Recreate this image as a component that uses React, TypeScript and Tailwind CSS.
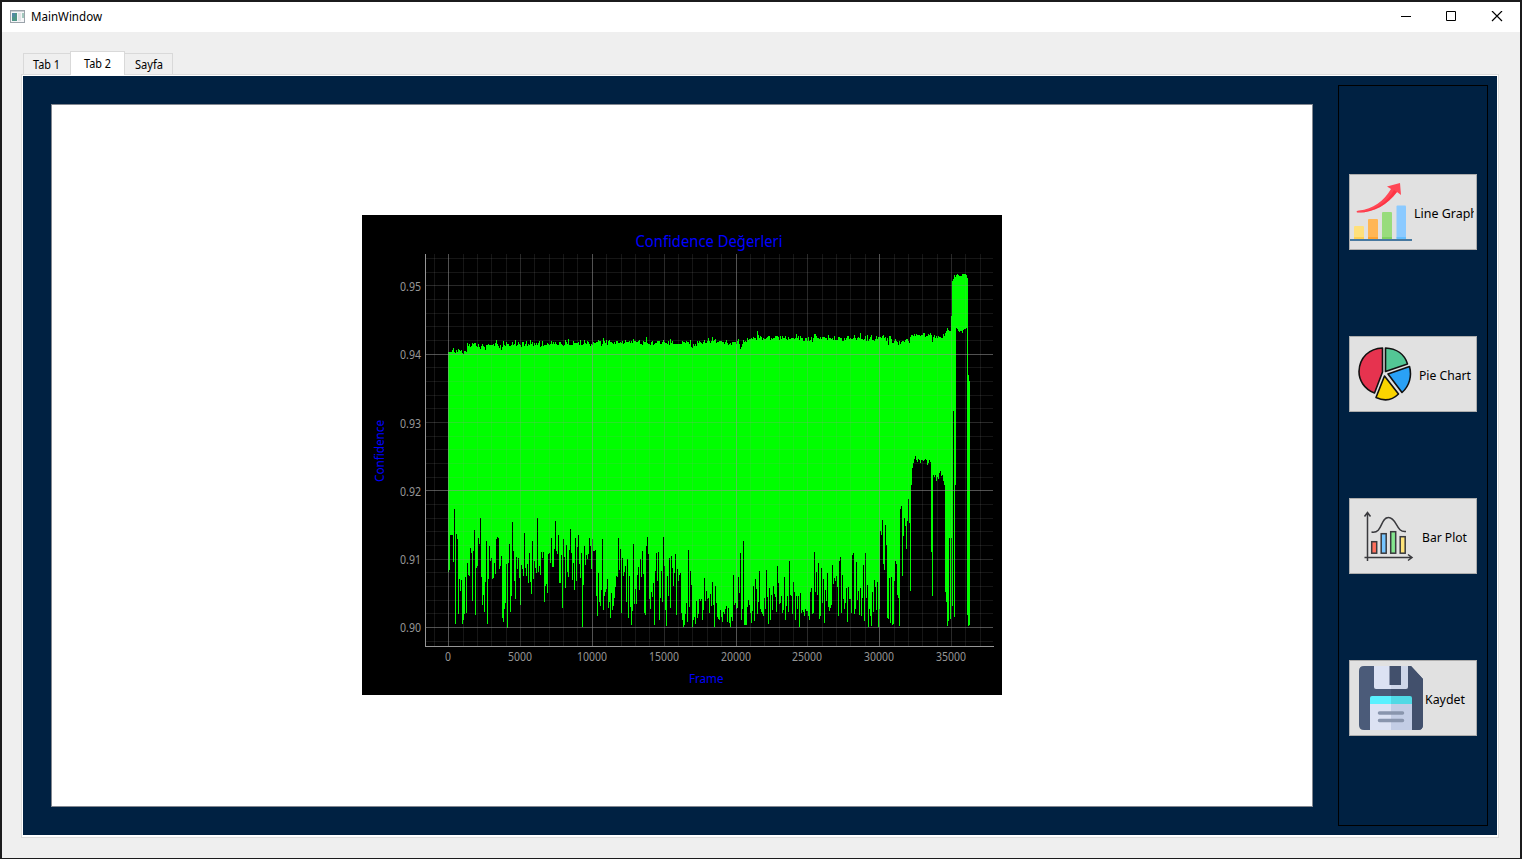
import type { ReactNode } from "react";

const FIRST_X = 86;
const ZERO_Y = 412;
const COL = 3;

// Lower edge of the trace, one sample per pixel column, in thirds of a pixel below y = 280.
const LOW_A = `230 224 120 120 120 200 42 386 118 132 356 252 288 255 386 374 356 246 353 204 240 243 159 174 317 168 105 359 219 213
129 147 69 246 329 300 350 261 138 386 252 153 198 189 252 248 204 237 132 126 129 222 213 183 368 380 342 323 207 398
204 147 350 303 81 168 258 311 186 222 189 249 329 210 222 243 114 219 243 207 264 174 261 296 138 252 198 219 234 69
231 213 240 171 189 171 320 272 267 294 177 174 204 129 216 216 162 78 168 177 120 264 264 180 338 132 186 279 150 231
246 165 102 174 255 204 285 129 258 156 120 207 249 174 396 270 153 210 180 192 177 129 153 222 132 168 168 165 303 362
234 320 332 285 132 345 303 291 282 252 338 321 368 294 345 332 308 276 243 246 129 225 162 353 189 243 231 213 320 192
368 243 335 390 347 147 327 282 327 240 216 285 192 246 168 237 353 359 153 126 177 311 342 291 305 264 390 228 174 258
171 374 308 228 320 126 213 345 392 243 303 189 338 183 219 272 234 177 359 222 258 240 234 353`;

const LOW_B = `374 396 390 356 323 380 165 335 228 270 396 374 366 386 318 368 356 312 318 312 374 345 249 318 288 311 308 353 297 332
261 329 396 273 323 366 372 374 345 366 380 350 356 342 333 380 338 383 396 366 377 240 329 323 342 338 246 294 174 374
342 138 390 390 390 335 315 330 353 383 348 273 377 252 282 356 320 228 342 350 356 362 308 341 225 305 386 279 374 300
345 273 297 306 350 213 264 326 323 303 353 345 246 374 332 303 350 198 300 303 356 261 291 374 303 341 303 396 294 353
345 350 362 342 347 347 362 374 291 279 356 353 171 291 231 300 204 372 362 219 323 252 383 285 317 234 335 347 338 329
210 267 249 258 243 276 362 198 186 353 240 311 341 323 279 380 276 311 311 353 180 174 356 342 201 314 288 359 279 362
309 210 377 174 308 270 396 341 362 392 291 350 255 276 345 261 396 342 108 120 75 207 225 90 150 368 372 249 383 246
390 386 258 198 207 300 308 392 42 33 243 123 69 93 162 78 12 84 288`;

// The raised stretch before the last burst.
const LOW_C = `-30 -81 -96 -108 -117 -105 -99 -108 -105 -96 -105 -105 -102 -105 -108 -105 -90 -96 -105 -99 171 302
-60 -54 -60 -42 -54 -48 -66 -72 -57 -60 -42 -30 290 320 392 377 129 372 129 332`;

// Upper edge, in thirds of a pixel from the top of the plot image.
const HIGH_A = `411 411 411 411 405 399 411 414 405 411 402 405 408 405 414 417 408 408 411 384 393 387 396 393 384 387 384 384 393 396
387 396 402 393 387 393 396 405 390 390 387 390 390 390 390 387 393 384 375 387 393 399 390 405 396 378 390 393 381 387
387 393 393 390 381 390 387 375 393 390 381 387 390 396 381 381 393 387 378 393 387 390 375 387 381 393 384 390 384 390
384 378 396 393 378 393 390 390 390 384 387 390 387 378 387 381 387 381 387 390 390 381 381 387 390 393 390 375 381 387
372 390 390 390 390 378 384 384 384 384 381 390 375 390 390 387 375 384 387 378 381 387 393 387 390 381 384 384 381 381
375 378 378 393 387 369 378 384 375 390 378 375 381 381 384 387 381 387 378 378 384 384 381 384 378 387 384 375 381 381
381 378 384 378 384 372 378 378 381 381 378 375 387 387 390 378 381 381 366 384 387 387 390 381 378 390 387 384 384 378
378 378 387 387 381 375 381 384 384 387 378 390 372 384 378 387`;

const HIGH_B = `378 381 381 384 378 381 381 387 375 396 399 387 393 387 393 378 384 378 381 384 387 381 375 384 384 378 369 378
384 378 366 378 375 372 384 381 381 378 378 378 381 381 387 381 375 384 390 387 384 390 381 381 381 381 387 378 372 387
402 396 387 375 381 378 381 369 375 372 372 369 372 366 369 369 375 348 360 369 363 366 375 369 372 372 369 366 363
363 375 369 372 369 369 363 363 363 366 375 363 372 363 369 369 363 372 375 366 372 372 369 369 369 372 369 357 369 363
375 363 369 369 378 378 369 369 378 366 378 375 366 381 369 357 357 363 369 369 372 366 372 366 366 366 369 369 375 360
369 369 372 369 375 363 375 375 375 366 366 369 369 378 378 369 375 369 363 363 372 369 372 372 369 360 369 375 369 366
369 354 372 372 375 372 363 378 360 378 372 366 360 375 375 378 372 363 372 366 366 366 369 363 360 369 366 378 369 390
363 363 372 384 384 378 372 378 381 390 378 387 381 378 378 381 375 372 372 378 384 366 360 360 363 357 363 357 360 360
360 363 360 360 354 354 366 363 363 357 360 354 360 381 366 360 369 363 369 363 366 366 369 369 357 363 369 360 354 339
345 348 348 303`;

const numbers = (s: string) => s.trim().split(/\s+/).map(Number);
const lowLeft = numbers(LOW_A).slice(0, 234);
const lowRight = numbers(LOW_B);
const lowTail = numbers(LOW_C);
const highLeft = numbers(HIGH_A).slice(0, 234);
const highRight = numbers(HIGH_B);

function traceColumns(): string {
  const at = new Map<number, [number, number]>();
  const top = (x: number) => {
    const list = x < 320 ? highLeft : highRight;
    const i = x < 320 ? x - FIRST_X : x - 320;
    const v = list[Math.min(i, list.length - 1)];
    return Math.round(v / COL);
  };
  const bottom = (v: number) => Math.round(280 + v / COL);
  lowLeft.forEach((v, i) => at.set(FIRST_X + i, [top(FIRST_X + i), bottom(v)]));
  lowRight.forEach((v, i) => at.set(320 + i, [top(320 + i), bottom(v)]));
  lowTail.forEach((v, i) => at.set(549 + i, [top(549 + i), bottom(v)]));
  [118, 116, 113, 115, 116, 116].forEach((y, i) => {
    const low = at.get(583 + i)?.[1] ?? 391;
    at.set(583 + i, [y, low]);
  });
  at.set(589, [101, 323]);
  at.set(590, [66, 391]);
  at.set(591, [64, 196]);
  at.set(592, [60, 402]);
  at.set(593, [62, 270]);
  const burstTop = [60, 59, 60, 61, 61, 61, 59, 59, 59, 59, 60];
  const burstLow = [113, 114, 116, 117, 116, 116, 118, 115, 114, 114, 113];
  burstTop.forEach((y, i) => at.set(594 + i, [y, burstLow[i]]));
  at.set(605, [63, 400]);
  at.set(606, [160, 411]);
  at.set(607, [166, 410]);
  return [...at].map(([x, [a, b]]) => `M${x} ${a}h1V${b}h-1z`).join("");
}

const trace = traceColumns();

const xLines = Array.from({ length: 39 }, (_, i) => i - 1).map((k) => ({
  p: Math.round(86.2 + k * 14.365),
  o: k % 10 === 0 ? 0.55 : k % 5 === 0 ? 0.27 : 0.15,
}));
const yLines = Array.from({ length: 29 }, (_, i) => i - 1).map((k) => ({
  p: Math.round(ZERO_Y - k * 13.67),
  o: k % 10 === 0 ? 0.55 : k % 5 === 0 ? 0.27 : 0.15,
}));

const xTicks: [string, number, number][] = [
  ["0", 86, 6], ["5000", 158, 24], ["10000", 230, 30], ["15000", 302, 30],
  ["20000", 374, 30], ["25000", 445, 30], ["30000", 517, 30], ["35000", 589, 30],
];
const yTicks: [string, number][] = [
  ["0.95", 76], ["0.94", 144], ["0.93", 213], ["0.92", 281], ["0.91", 349], ["0.90", 417],
];

function Plot() {
  return (
    <svg width="640" height="480" viewBox="0 0 640 480" className="block shrink-0 bg-black font-['Noto_Sans',sans-serif]">
      <path d={trace} fill="#00ff00" shapeRendering="crispEdges" />
      <g fill="#969696" shapeRendering="crispEdges">
        {xLines.map((l) => <rect key={l.p} x={l.p} y="39" width="1" height="392" fillOpacity={l.o} />)}
        {yLines.map((l) => <rect key={l.p} x="64" y={l.p} width="567" height="1" fillOpacity={l.o} />)}
        <rect x="63" y="39" width="1" height="393" />
        <rect x="63" y="431" width="569" height="1" />
      </g>
      <g fill="#969696" fontSize="12.5">
        {xTicks.map(([t, x, w]) => <text key={t} x={x - w / 2} y="446" textLength={w} lengthAdjust="spacingAndGlyphs">{t}</text>)}
        {yTicks.map(([t, y]) => <text key={t} x="38" y={y} textLength="21" lengthAdjust="spacingAndGlyphs">{t}</text>)}
      </g>
      <g fill="#0000ff">
        <text x="273.500" y="32" fontSize="16" textLength="147" lengthAdjust="spacingAndGlyphs">Confidence Değerleri</text>
        <text x="327" y="468" fontSize="12.5" textLength="34.500" lengthAdjust="spacingAndGlyphs">Frame</text>
        <text transform="translate(21.500 267) rotate(-90)" fontSize="12" textLength="62" lengthAdjust="spacingAndGlyphs">Confidence</text>
      </g>
    </svg>
  );
}

function Label({ text, width }: { text: string; width: number }) {
  return (
    <svg width={width} height="20" className="block shrink-0 overflow-visible font-['Noto_Sans',sans-serif]">
      <text x="0" y="14" fontSize="12.5" textLength={width} lengthAdjust="spacingAndGlyphs" fill="#000">{text}</text>
    </svg>
  );
}

function LineGraphIcon() {
  return (
    <svg width="64" height="64" viewBox="0 0 64 64" className="block shrink-0">
      <rect x="5" y="46" width="10" height="13" rx="1" fill="#ffe07a" />
      <rect x="19" y="39" width="10" height="20" rx="1" fill="#ffb655" />
      <rect x="33" y="32" width="10" height="27" rx="1" fill="#98dc7c" />
      <rect x="47.500" y="25.500" width="9.500" height="33" rx="1" fill="#8bcaff" />
      <path d="M5 57h10v2H5z" fill="#ffd052" /><path d="M19 57h10v2H19z" fill="#ffa533" />
      <path d="M33 57h10v2H33z" fill="#80d261" /><path d="M47.500 57h9.500v2h-9.500z" fill="#66bfff" />
      <path d="M-1 60h64" stroke="#4779a0" strokeWidth="2" />
      <path d="M8 32.500c-1-1-.2-2 2-2C24 29 35 21 42 9l-4-2.500L51 3l1 12-4-3C38 25 25 33 8 32.500z" fill="#ff4755" />
      <path d="M8 32.500C25 31 38 23 45 10l3 2C38 25 25 33 8 32.500z" fill="#fc2b3a" opacity=".65" />
    </svg>
  );
}

function PieIcon() {
  return (
    <svg width="64" height="64" viewBox="0 0 64 64" className="block shrink-0" stroke="#111" strokeWidth="1.600" strokeLinejoin="round">
      <path d="M28.500 6V30L20.500 51C10 47 5 38 5 29.500 5.500 15 15.500 6.500 28.500 6z" fill="#e6334f" />
      <path d="M31.500 6C42 6.500 50.500 12 53.500 22L31.500 29.500z" fill="#53c795" />
      <path d="M34 32 55.500 24.500C58 34 55.500 44 48 50.500z" fill="#2aa1f5" />
      <path d="M30.500 34 44.500 52C38 58.500 29.500 59 22 55.500z" fill="#fad400" />
    </svg>
  );
}

function BarPlotIcon() {
  return (
    <svg width="64" height="64" viewBox="0 0 64 64" className="block shrink-0" fill="none" stroke="#3a3a3e" strokeWidth="1.500">
      <path d="M13.500 57V9M10.500 12.500l3-4 3 4M10.500 53.500H57M54 50.500l4 3-4 3" />
      <path d="M17.500 28C29 30 26 13.500 34.500 13.500S42 29 52 27.500" />
      <rect x="17.700" y="37.700" width="5" height="11.500" fill="#ff705c" />
      <rect x="27.200" y="29.700" width="5" height="19.500" fill="#75c5ff" />
      <rect x="36.700" y="27.700" width="5" height="21.500" fill="#84e58e" />
      <rect x="46.200" y="32.700" width="5" height="16.500" fill="#ffe47a" />
    </svg>
  );
}

function SaveIcon() {
  return (
    <svg width="64" height="64" viewBox="0 0 64 64" className="block shrink-0">
      <path d="M5 0h47l12 13v46q0 5-5 5H5q-5 0-5-5V5q0-5 5-5z" fill="#4b5b79" />
      <path d="M32 0h20l12 13v46q0 5-5 5H32z" fill="#42506c" />
      <path d="M15 0h17v23H17q-2 0-2-2z" fill="#dce2f3" />
      <path d="M32 0h17v21q0 2-2 2H32z" fill="#ced6e8" />
      <path d="M30.500 0H42v19H30.500z" fill="#42506c" />
      <path d="M11 38h21v26H11z" fill="#dce2f3" /><path d="M32 38h21v26H32z" fill="#c3cde5" />
      <path d="M13 30h19v8H11v-6q0-2 2-2z" fill="#5af1ff" /><path d="M32 30h19q2 0 2 2v6H32z" fill="#50d9e5" />
      <path d="M20.500 47h23M20.500 54.500h23" stroke="#8995ad" strokeWidth="3.500" strokeLinecap="round" />
    </svg>
  );
}

function SideButton({ className, children }: { className: string; children: ReactNode }) {
  return (
    <button className={`flex h-[76px] w-32 shrink-0 items-center overflow-hidden border border-[#adadad] bg-[#e1e1e1] ${className}`}>
      {children}
    </button>
  );
}

function TitleBar() {
  return (
    <header className="flex h-[30px] shrink-0 items-center bg-white">
      <svg width="15" height="13" viewBox="0 0 15 13" className="mb-0.5 ml-2 block shrink-0" shapeRendering="crispEdges">
        <rect x=".5" y=".5" width="14" height="12" fill="#f5f6f8" stroke="#9ba3aa" />
        <rect x="1" y="1" width="13" height="1" fill="#c9ced3" />
        <rect x="2" y="3" width="5" height="8" fill="#4f9688" />
        <rect x="2" y="3" width="3" height="4" fill="#538aa3" />
        <rect x="8" y="3" width="3" height="8" fill="#e1e3e5" />
        <rect x="12" y="3" width="2" height="5" fill="#a2c8bd" />
      </svg>
      <div className="ml-1.5"><Label text="MainWindow" width={71} /></div>
      <svg width="104" height="12" viewBox="0 0 104 12" className="ml-auto mr-[17px] block" fill="none" stroke="#000">
        <path d="M2 5.500h10" /><path d="M47.500.5h9v9h-9z" /><path d="M93 0l10 10M103 0 93 10" strokeWidth="1.200" />
      </svg>
    </header>
  );
}

export default function App() {
  return (
    <div className="flex h-[859px] w-[1522px] flex-col overflow-hidden border-x-2 border-b border-t-2 border-[#1b1b1c] bg-[#efefef]">
      <TitleBar />
      <nav className="flex h-[42px] shrink-0 items-end pl-[21px]">
        <div className="flex h-[21px] w-[47px] items-center border border-b-0 border-r-0 border-[#d9d9d9] pl-[9px] pt-0.5"><Label text="Tab 1" width={27} /></div>
        <div className="relative z-10 -mb-px flex h-6 w-[55px] items-center border border-b-0 border-[#d9d9d9] bg-white pl-[13px]"><Label text="Tab 2" width={27} /></div>
        <div className="flex h-[21px] w-12 items-center border border-b-0 border-l-0 border-[#d9d9d9] pl-2.5 pt-0.5"><Label text="Sayfa" width={28} /></div>
      </nav>
      <main className="ml-[19px] h-[764px] w-[1478px] shrink-0 border border-[#dcdcdc] bg-white px-px pb-0.5 pt-px">
        <div className="flex h-[759px] w-[1474px] bg-[#002142]">
          <section className="ml-7 mt-7 flex h-[703px] w-[1262px] shrink-0 items-start justify-center border border-[#828790] bg-white pt-[110px]">
            <Plot />
          </section>
          <aside className="ml-[25px] mt-[9px] flex h-[741px] w-[150px] shrink-0 flex-col items-center gap-[86px] border border-black pt-[88px]">
            <SideButton className="pr-0.5">
              <div className="-ml-px"><LineGraphIcon /></div>
              <div className="ml-px w-[60px] overflow-hidden pt-1"><Label text="Line Graph" width={64} /></div>
            </SideButton>
            <SideButton className="pl-1">
              <PieIcon />
              <div className="ml-px pt-1"><Label text="Pie Chart" width={52} /></div>
            </SideButton>
            <SideButton className="pl-2">
              <div className="-ml-1"><BarPlotIcon /></div>
              <div className="ml-1 pt-1"><Label text="Bar Plot" width={45} /></div>
            </SideButton>
            <SideButton className="pl-[9px]">
              <SaveIcon />
              <div className="ml-0.5 pt-1"><Label text="Kaydet" width={40} /></div>
            </SideButton>
          </aside>
        </div>
      </main>
    </div>
  );
}
